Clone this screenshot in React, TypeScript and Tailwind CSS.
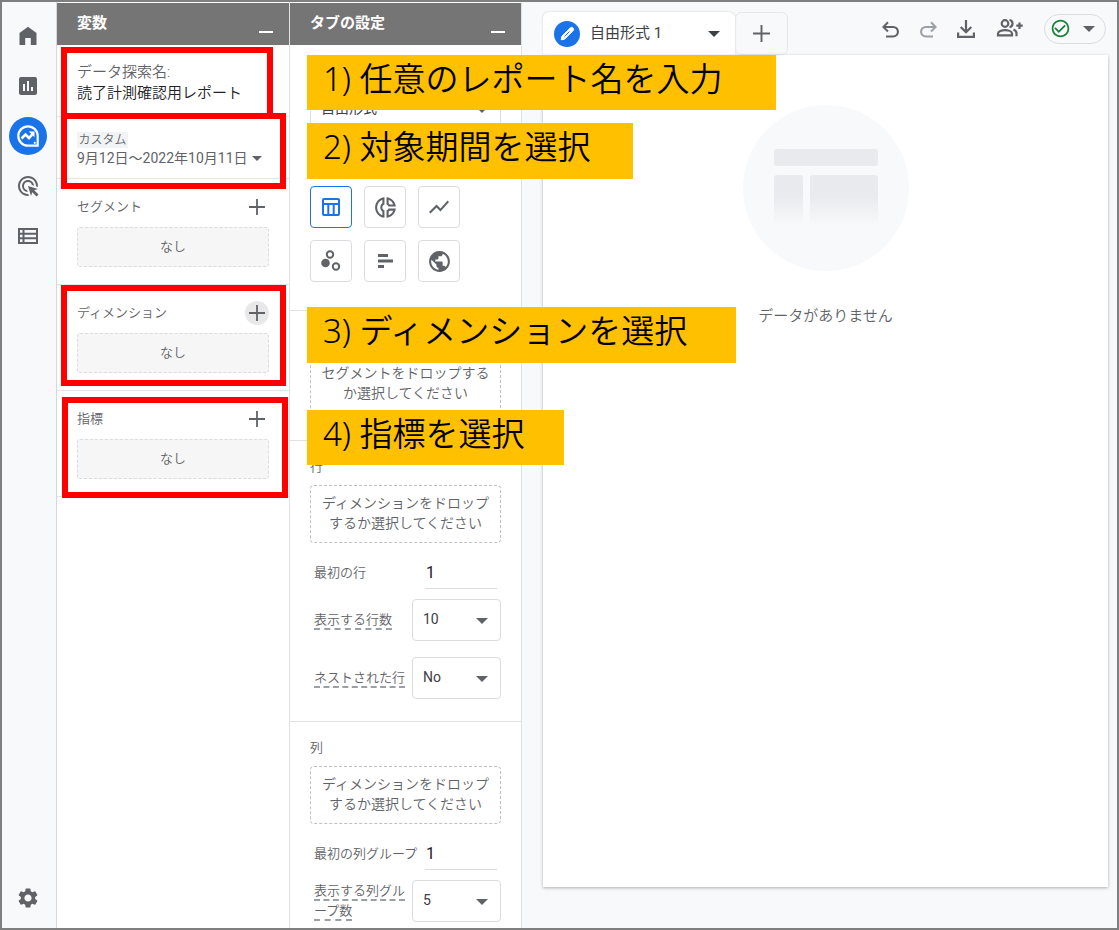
import React, { useState } from 'react';
import { MdAdsClick, MdAssessment, MdCheckCircleOutline, MdOutlineDonutSmall, MdPublic, MdSettings, MdShowChart } from 'react-icons/md';

const chartTypes = [
  { label: '自由形式', icon: <TableIcon /> },
  { label: 'ドーナツ グラフ', icon: <MdOutlineDonutSmall size={25} /> },
  { label: '折れ線グラフ', icon: <MdShowChart size={24} /> },
  { label: '散布図', icon: <ScatterIcon /> },
  { label: '棒グラフ', icon: <BarsIcon /> },
  { label: '地図', icon: <MdPublic size={25} /> },
];

function TableIcon() {
  return (
    <svg width="20" height="20" viewBox="0 0 20 20" fill="none" stroke="currentColor" strokeWidth="2">
      <rect x="2" y="2" width="16" height="16" rx="1" />
      <path d="M2 7h16M7.3 7v11M12.7 7v11" />
    </svg>
  );
}

function ScatterIcon() {
  return (
    <svg width="24" height="24" viewBox="0 0 24 24" fill="none" stroke="currentColor" strokeWidth="2">
      <circle cx="6.500" cy="14" r="4.300" fill="currentColor" stroke="none" />
      <circle cx="11" cy="5.500" r="3.200" />
      <circle cx="17" cy="17.500" r="3.200" />
    </svg>
  );
}

function BarsIcon() {
  return (
    <svg width="24" height="24" viewBox="0 0 24 24" fill="currentColor">
      <path d="M5 5h10v3H5zM5 10.500h15v3H5zM5 16h6v3H5z" />
    </svg>
  );
}

function HomeIcon() {
  return (
    <svg width="24" height="24" viewBox="0 0 24 24" fill="currentColor">
      <path d="M3.500 21V9L12 2.800 20.500 9v12h-5.700v-7H9.200v7z" />
    </svg>
  );
}

function ExploreIcon() {
  return (
    <svg width="24" height="24" viewBox="0 0 24 24" fill="none" stroke="currentColor">
      <path d="M12 2.300a9.700 9.700 0 1 0 0 19.400h9.700V12A9.700 9.700 0 0 0 12 2.300z" strokeWidth="2.200" />
      <path d="M5.500 14.500l4-4 3.500 3.500 4.500-5" strokeWidth="2.600" />
      <path d="M12.800 7.500h5.700v5.700z" fill="currentColor" stroke="none" />
      <circle cx="18.800" cy="18.800" r="1.100" fill="currentColor" stroke="none" />
    </svg>
  );
}

function ListIcon() {
  return (
    <svg width="20" height="16" viewBox="0 0 20 16" fill="none" stroke="currentColor" strokeWidth="2">
      <path d="M1 1h18v14H1zM5.500 1v14M1 5.700h18M1 10.300h18" />
    </svg>
  );
}

function UndoIcon({ className = '' }: { className?: string }) {
  return (
    <svg width="24" height="24" viewBox="0 0 24 24" fill="currentColor" className={className}>
      <path d="M7 20.500v-2h7.100q1.600 0 2.700-1.100t1.100-2.700q0-1.600-1.100-2.700T14.100 10.900H6.800l2.900 2.900-1.400 1.400L3 9.900l5.300-5.300 1.400 1.400L6.800 8.900h7.300q2.500 0 4.200 1.700T20 14.700t-1.700 4.100-4.200 1.700z" />
    </svg>
  );
}

function DownloadIcon() {
  return (
    <svg width="24" height="24" viewBox="0 0 24 24" fill="none" stroke="currentColor" strokeWidth="2.200">
      <path d="M12 3v12M6.700 10l5.300 5.300 5.300-5.300M4.100 15.500v4.400h15.800v-4.400" />
    </svg>
  );
}

function GroupAddIcon() {
  return (
    <svg width="28" height="24" viewBox="0 0 28 24" fill="none" stroke="currentColor" strokeWidth="2.200">
      <circle cx="10" cy="6.500" r="3.300" />
      <path d="M3 18.400v-2c0-2.200 4-3.200 7-3.200s7 1 7 3.200v2z" />
      <path d="M14.500 3q3 .2 3 3.500t-3 3.500M18.500 12.500q3 1.300 3 3.500v3.300M24.500 5.500v6.500M21.300 8.700h6.400" />
    </svg>
  );
}

function PencilIcon() {
  return (
    <svg width="26" height="26" viewBox="0 0 26 26" fill="none">
      <circle cx="13" cy="13" r="13" fill="#1a73e8" />
      <path d="M7.200 18.800l.7-3.500 8.300-8.300a1.900 1.900 0 0 1 2.800 2.800l-8.300 8.300z" fill="white" stroke="white" strokeLinejoin="round" />
      <path d="M10.500 15.500l5-5" stroke="#1a73e8" />
    </svg>
  );
}

function Caret() {
  return (
    <svg width="12" height="6" viewBox="0 0 12 6" fill="currentColor" className="shrink-0">
      <path d="M0 0h12L6 6z" />
    </svg>
  );
}

function PlusIcon({ size = 16 }: { size?: number }) {
  return (
    <svg width={size} height={size} viewBox="0 0 16 16" stroke="currentColor" strokeWidth="1.800">
      <path d="M8 0v16M0 8h16" />
    </svg>
  );
}

function PanelHeader({ title }: { title: string }) {
  return (
    <header className="flex h-[43px] shrink-0 justify-between border-t border-white bg-[#757575] pr-4 pl-5 text-white">
      <h2 className="pt-2 text-[15px] leading-6 font-bold">{title}</h2>
      <button type="button" aria-label="最小化" className="flex h-8 items-end pb-[2px]">
        <span className="block h-[2px] w-[14px] bg-white" />
      </button>
    </header>
  );
}

function VariableSection({ title, active }: { title: string; active?: boolean }) {
  return (
    <section className="border-b border-[#e4e5e7] px-5 pt-4 pb-[17px]">
      <div className="flex h-6 items-center justify-between">
        <h3 className="text-[13px]">{title}</h3>
        <button
          type="button"
          aria-label={`${title}を追加`}
          className={`flex h-6 w-6 items-center justify-center rounded-full ${active ? 'bg-[#e8e8e8]' : ''}`}
        >
          <PlusIcon />
        </button>
      </div>
      <div className="mt-2 flex h-10 items-center justify-center rounded-[3px] border border-dashed border-[#dadce0] bg-[#f6f6f6] text-[13px]">なし</div>
    </section>
  );
}

function DropZone({ lines }: { lines: string[] }) {
  return (
    <button type="button" className="block w-full rounded border border-dashed border-[#bdc1c6] pt-[7px] pb-[9px] text-center text-[14px] leading-5">
      {lines.map((line) => (
        <span key={line} className="block whitespace-nowrap">{line}</span>
      ))}
    </button>
  );
}

function SettingSelect({ id, label, options }: { id: string; label: string; options: string[] }) {
  return (
    <div className="flex items-center pl-1">
      <div className="w-[98px] shrink-0 pr-1 text-[13px] leading-5">
        <label htmlFor={id} className="border-b-2 border-dashed border-[#9aa0a6] pb-px">{label}</label>
      </div>
      <SelectBox id={id} options={options} />
    </div>
  );
}

function SelectBox({ id, options, label }: { id: string; options: string[]; label?: string }) {
  return (
    <div className="relative min-w-0 flex-1">
      <select
        id={id}
        aria-label={label}
        className="block h-[42px] w-full appearance-none rounded border border-[#dadce0] bg-white pr-8 pb-[2px] pl-[10px] text-[14px] font-normal text-[#3c4043]"
      >
        {options.map((o) => (
          <option key={o}>{o}</option>
        ))}
      </select>
      <span className="pointer-events-none absolute top-[19px] right-[13px]"><Caret /></span>
    </div>
  );
}

function FirstIndex({ id, label }: { id: string; label: string }) {
  return (
    <div className="mt-[14px] mb-[10px] flex h-8 items-center pr-1 pl-1">
      <label htmlFor={id} className="w-[111px] shrink-0 text-[13px] whitespace-nowrap">{label}</label>
      <input id={id} defaultValue="1" className="h-8 min-w-0 flex-1 border-b border-[#dadce0] pl-px text-[16px] font-normal text-[#202124] outline-none" />
    </div>
  );
}

export default function App() {
  const [chart, setChart] = useState('自由形式');
  return (
    <div
      lang="ja"
      className="relative flex h-screen overflow-hidden border-2 border-[#7f7f7f] bg-[#f8f9fb] font-[350] text-[#5f6368]"
      style={{ fontFamily: 'Roboto, "Noto Sans CJK JP", sans-serif' }}
    >
      <nav className="flex w-[55px] shrink-0 flex-col items-center gap-3 border-r border-[#d5d7da] pt-[15px] pr-[2px] pb-[11px]">
        <a href="#home" aria-label="ホーム" className="flex h-[38px] w-[38px] items-center justify-center"><HomeIcon /></a>
        <a href="#reports" aria-label="レポート" className="flex h-[38px] w-[38px] items-center justify-center"><MdAssessment size={24} /></a>
        <a href="#explore" aria-label="探索" className="flex h-[38px] w-[38px] items-center justify-center rounded-full bg-[#1a73e8] text-white"><ExploreIcon /></a>
        <a href="#ads" aria-label="広告" className="flex h-[38px] w-[38px] items-center justify-center"><MdAdsClick size={24} /></a>
        <a href="#config" aria-label="設定" className="flex h-[38px] w-[38px] items-center justify-center"><ListIcon /></a>
        <a href="#admin" aria-label="管理" className="mt-auto flex h-[38px] w-[38px] items-center justify-center"><MdSettings size={24} /></a>
      </nav>

      <aside className="w-[233px] shrink-0 border-r border-[#e0e1e3] bg-white">
        <PanelHeader title="変数" />
        <div className="border-b border-[#e4e5e7] px-5 pt-4 pb-3">
          <label htmlFor="name" className="block text-[15px] leading-[22px]">データ探索名:</label>
          <input id="name" defaultValue="読了計測確認用レポート" className="block h-[21px] w-full text-[15px] text-[#202124] outline-none" />
        </div>
        <div className="border-b border-[#e4e5e7] px-5 pt-[15px] pb-[9px]">
          <span className="block w-[51px] bg-[#f1f3f4] text-center text-[12px] leading-4">カスタム</span>
          <button type="button" className="flex h-[21px] items-center gap-1 text-[14px] font-normal whitespace-nowrap">
            9月12日～2022年10月11日
            <svg width="10" height="5" viewBox="0 0 10 5" fill="currentColor"><path d="M0 0h10L5 5z" /></svg>
          </button>
        </div>
        <VariableSection title="セグメント" />
        <VariableSection title="ディメンション" active />
        <VariableSection title="指標" />
      </aside>

      <aside className="w-[232px] shrink-0 overflow-hidden border-r border-[#e0e1e3] bg-white">
        <PanelHeader title="タブの設定" />
        <section className="border-b border-[#e0e1e3] px-5 pt-[43px] pb-7">
          <div className="flex">
            <SelectBox id="technique" label="手法" options={['自由形式']} />
          </div>
          <div className="mt-14 grid grid-cols-[repeat(3,42px)] gap-3">
            {chartTypes.map((c) => (
              <button
                key={c.label}
                type="button"
                aria-label={c.label}
                onClick={() => setChart(c.label)}
                className={`flex h-[42px] items-center justify-center rounded border ${chart === c.label ? 'border-[#1a73e8] text-[#1a73e8]' : 'border-[#dadce0]'}`}
              >
                {c.icon}
              </button>
            ))}
          </div>
        </section>
        <section aria-label="セグメント" className="border-b border-[#e0e1e3] px-5 pt-11 pb-[27px]">
          <DropZone lines={['セグメントをドロップする', 'か選択してください']} />
        </section>
        <section className="border-b border-[#e0e1e3] px-5 pt-4 pb-[22px]">
          <h3 className="mb-2 text-[13px] leading-5">行</h3>
          <DropZone lines={['ディメンションをドロップ', 'するか選択してください']} />
          <FirstIndex id="first-row" label="最初の行" />
          <div className="flex flex-col gap-4">
            <SettingSelect id="row-count" label="表示する行数" options={['10', '25', '50']} />
            <SettingSelect id="nested" label="ネストされた行" options={['No', 'Yes']} />
          </div>
        </section>
        <section className="px-5 pt-4">
          <h3 className="mb-2 text-[13px] leading-5">列</h3>
          <DropZone lines={['ディメンションをドロップ', 'するか選択してください']} />
          <FirstIndex id="first-col" label="最初の列グループ" />
          <SettingSelect id="col-count" label="表示する列グループ数" options={['5', '10', '15']} />
        </section>
      </aside>

      <main className="flex min-w-0 flex-1 flex-col pr-[9px] pb-[41px] pl-[21px]">
        <div className="flex h-[53px] shrink-0 items-end justify-between">
          <div className="flex">
            <button type="button" className="flex h-[43px] w-[192px] items-center rounded-t-md bg-white pr-[15px] pl-[11px] text-[15px] font-normal text-[#3c4043] shadow-[0_0_2px_rgba(60,64,67,0.25)]">
              <PencilIcon />
              <span className="ml-[10px] flex-1 text-left">自由形式 1</span>
              <Caret />
            </button>
            <button type="button" aria-label="タブを追加" className="flex h-[43px] w-[53px] items-center justify-center rounded-md border border-[#e6e8eb]">
              <PlusIcon size={17} />
            </button>
          </div>
          <div className="flex h-[53px] items-center pr-[2px]">
            <button type="button" aria-label="元に戻す"><UndoIcon /></button>
            <button type="button" aria-label="やり直す" className="ml-[13px] text-[#9aa0a6]"><UndoIcon className="-scale-x-100" /></button>
            <button type="button" aria-label="ダウンロード" className="ml-[14px]"><DownloadIcon /></button>
            <button type="button" aria-label="共有" className="ml-[17px]"><GroupAddIcon /></button>
            <button type="button" aria-label="ステータス" className="ml-[21px] flex h-[30px] w-[62px] items-center gap-3 rounded-full border border-[#dadce0] pl-[5px]">
              <MdCheckCircleOutline size={21} className="text-[#188038]" />
              <Caret />
            </button>
          </div>
        </div>
        <div className="flex flex-1 flex-col items-center bg-white pt-[50px] shadow-[0_1px_3px_rgba(60,64,67,0.4)]">
          <svg width="166" height="166" viewBox="0 0 166 166">
            <defs>
              <linearGradient id="fade" x1="0" y1="0" x2="0" y2="1">
                <stop offset="0.400" stopColor="#e8eaed" />
                <stop offset="1" stopColor="#f8f9fb" />
              </linearGradient>
            </defs>
            <circle cx="83" cy="83" r="83" fill="#f8f9fb" />
            <rect x="31" y="44" width="104" height="17" rx="3" fill="#e8eaed" />
            <rect x="31" y="70" width="29" height="51" rx="3" fill="url(#fade)" />
            <rect x="67" y="70" width="68" height="51" rx="3" fill="url(#fade)" />
          </svg>
          <p className="mt-[33px] text-[15px] leading-6">データがありません</p>
        </div>
      </main>

      {/* red frames around each step */}
      <div className="pointer-events-none absolute top-[45px] left-[59px] h-[72px] w-[212px] border-6 border-[#ff0000]" />
      <div className="pointer-events-none absolute top-[111px] left-[59px] h-[76px] w-[225px] border-6 border-[#ff0000]" />
      <div className="pointer-events-none absolute top-[283px] left-[59px] h-[101px] w-[225px] border-6 border-[#ff0000]" />
      <div className="pointer-events-none absolute top-[395px] left-[60px] h-[101px] w-[226px] border-6 border-[#ff0000]" />

      {/* step captions */}
      <div className="absolute top-[53px] left-[305px] w-[469px] bg-[#ffc000] pb-[7px] pl-4 font-['Noto_Sans','Noto_Sans_CJK_JP',sans-serif] text-[33px] leading-[48px] whitespace-nowrap text-black">1) 任意のレポート名を入力</div>
      <div className="absolute top-[121px] left-[305px] w-[326px] bg-[#ffc000] pb-[8px] pl-4 font-['Noto_Sans','Noto_Sans_CJK_JP',sans-serif] text-[33px] leading-[48px] whitespace-nowrap text-black">2) 対象期間を選択</div>
      <div className="absolute top-[305px] left-[305px] w-[429px] bg-[#ffc000] pb-[8px] pl-4 font-['Noto_Sans','Noto_Sans_CJK_JP',sans-serif] text-[33px] leading-[48px] whitespace-nowrap text-black">3) ディメンションを選択</div>
      <div className="absolute top-[408px] left-[305px] w-[257px] bg-[#ffc000] pb-[7px] pl-4 font-['Noto_Sans','Noto_Sans_CJK_JP',sans-serif] text-[33px] leading-[48px] whitespace-nowrap text-black">4) 指標を選択</div>
    </div>
  );
}
